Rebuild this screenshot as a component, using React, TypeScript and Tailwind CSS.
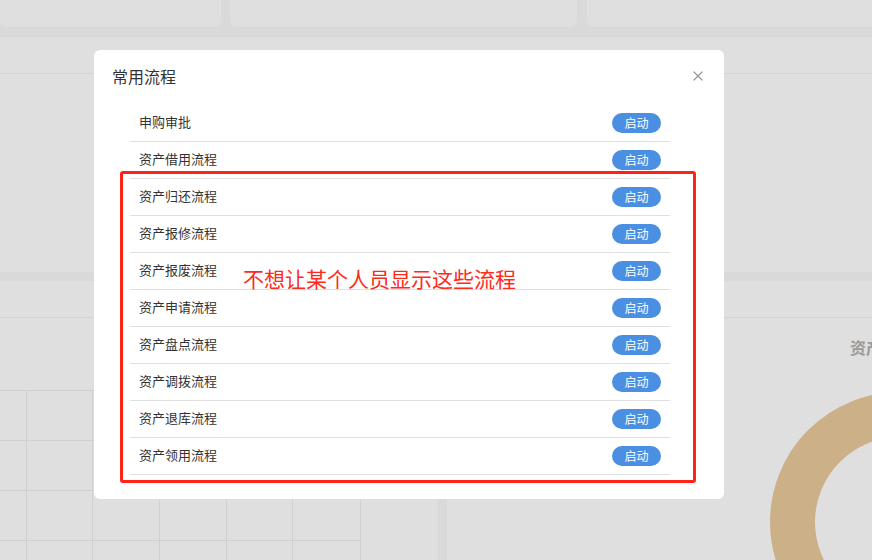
import { X } from "lucide-react";

const flows = [
  "申购审批",
  "资产借用流程",
  "资产归还流程",
  "资产报修流程",
  "资产报废流程",
  "资产申请流程",
  "资产盘点流程",
  "资产调拨流程",
  "资产退库流程",
  "资产领用流程",
];

const colWidths = ["w-[27px]", "w-[66px]", "w-[67px]", "w-[67px]", "w-[66px]", "w-[68px]"];

function Donut() {
  return (
    <svg width="260" height="260" viewBox="0 0 260 260" className="block">
      <circle cx="130" cy="130" r="107.5" fill="none" stroke="#ccb088" strokeWidth="45" />
    </svg>
  );
}

function Backdrop() {
  return (
    <div className="flex flex-col">
      <div className="flex h-[27px]">
        <div className="w-[221px] rounded-b-md bg-[#dfdfdf]" />
        <div className="ml-[9px] w-[347px] rounded-b-md bg-[#dfdfdf]" />
        <div className="ml-[10px] flex-1 rounded-bl-md bg-[#dfdfdf]" />
      </div>

      <div className="mt-[10px] h-[235px] bg-[#dfdfdf]">
        <div className="h-[37px] border-b border-[#d3d3d3]" />
      </div>

      <div className="mt-[9px] flex h-[279px] gap-[9px]">
        <div className="w-[438px] bg-[#dfdfdf]">
          <div className="h-[37px] border-b border-[#d3d3d3]" />
          <div className="mt-[72px]">
            {[0, 1, 2, 3].map((r) => (
              <div key={r} className="flex h-[50px] w-[361px] border-t border-[#d0d0d0]">
                {colWidths.map((w, c) => (
                  <div key={c} className={`${w} border-r border-[#d0d0d0]`} />
                ))}
              </div>
            ))}
          </div>
        </div>
        <div className="flex-1 overflow-hidden bg-[#dfdfdf]">
          <div className="h-[37px] border-b border-[#d3d3d3]" />
          {/* chart title runs past the window edge, as in the source */}
          <div className="mt-[19px] w-[500px] whitespace-nowrap pl-[403px] text-[16px] font-bold leading-[20px] text-[#9a9a9a]">
            资产分布情况
          </div>
          <div className="ml-[323px] mt-[35px]">
            <Donut />
          </div>
        </div>
      </div>
    </div>
  );
}

export default function App() {
  return (
    <div className="relative h-[560px] w-[872px] overflow-hidden bg-[#d9d9d9] font-['Microsoft_YaHei','Noto_Sans_CJK_SC',sans-serif]">
      <Backdrop />

      <div className="absolute left-[94px] top-[50px] h-[449px] w-[630px] rounded-[6px] bg-white">
        <div className="flex h-[51px] items-center justify-between pl-[18px] pr-[18px]">
          <span className="text-[16px] leading-[22px] text-[#333]">常用流程</span>
          <X size={16} strokeWidth={1.8} className="text-[#999]" />
        </div>
        <div className="ml-[36px] mt-[4px] w-[540px]">
          {flows.map((name) => (
            <div
              key={name}
              className="flex h-[37px] items-center justify-between border-b border-[#e0e0e0] pl-[9px] pr-[9px]"
            >
              <span className="-mt-[3px] text-[13px] leading-[18px] text-[#333]">{name}</span>
              <button className="flex h-[20px] w-[49px] items-center justify-center rounded-full bg-[#4a8fe2] text-[12px] leading-none text-white">
                启动
              </button>
            </div>
          ))}
        </div>
      </div>

      <div className="absolute left-[120px] top-[171px] h-[312px] w-[576px] rounded-[3px] border-[3px] border-[#ff2216]" />
      <div className="absolute left-[243px] top-[266px] whitespace-nowrap text-[21px] leading-[24px] text-[#ff2a1a]">
        不想让某个人员显示这些流程
      </div>
    </div>
  );
}
